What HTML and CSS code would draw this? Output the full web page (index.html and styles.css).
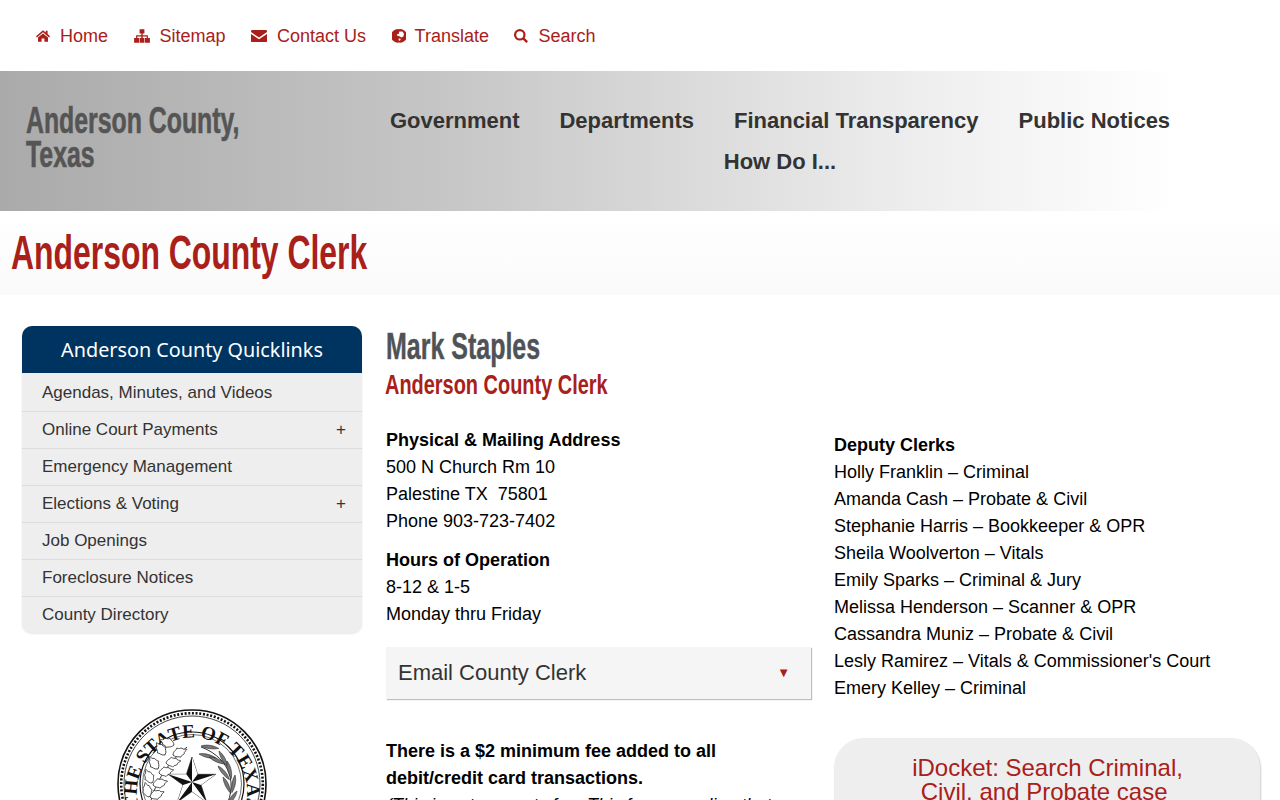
FILE: index.html
```html
<!DOCTYPE html>
<html lang="en">
<head>
  <meta charset="UTF-8">
  <meta name="viewport" content="width=device-width, initial-scale=1.0">
  <title>Anderson County Clerk</title>
  <link rel="stylesheet" href="styles.css">
</head>
<body>
  <nav class="top-nav">
    <a href="#"><svg class="icon icon-sm" viewBox="0 0 14 12"><path d="M7 0.3 L0 6.2 L0.9 7.4 L7 2.2 L13.1 7.4 L14 6.2 L11.6 4.1 L11.6 0.8 L9.7 0.8 L9.7 2.5 Z M7 3.4 L2 7.6 L2 11.8 L5.6 11.8 L5.6 8.6 L8.4 8.6 L8.4 11.8 L12 11.8 L12 7.6 Z"/></svg>Home</a>
    <a href="#"><svg class="icon icon-lg" viewBox="0 0 16 14"><path d="M5.6 0.3 H10.4 V4.5 H8.7 V6.2 H13.9 V9 H15.9 V13.7 H11 V9 H12.7 V7.4 H8.7 V9 H10.4 V13.7 H5.6 V9 H7.3 V7.4 H3.3 V9 H5 V13.7 H0.1 V9 H2.1 V6.2 H7.3 V4.5 H5.6 Z"/></svg>Sitemap</a>
    <a href="#"><svg class="icon icon-lg" viewBox="0 0 16 13"><path d="M1.2 0.5 H14.8 Q16 0.5 16 1.8 V2.6 L8 8 L0 2.6 V1.8 Q0 0.5 1.2 0.5 Z M0 4.4 L8 9.8 L16 4.4 V11.4 Q16 12.6 14.8 12.6 H1.2 Q0 12.6 0 11.4 Z"/></svg>Contact Us</a>
    <a href="#"><svg class="icon icon-sm icon-globe" viewBox="0 0 14 14"><path fill-rule="evenodd" d="M7 0.2 A6.8 6.8 0 1 0 7 13.6 A6.8 6.8 0 1 0 7 0.2 Z M7.4 2.4 L10.4 2.4 L12 4.8 L11.4 7.6 L9.4 8.4 L8 7.4 L5.4 6.8 L4.8 5.2 L6.6 5 Z M6.6 9.4 L8.8 9.8 L8 11.8 L6.8 11.4 Z"/></svg>Translate</a>
    <a href="#"><svg class="icon icon-sm" viewBox="0 0 14 14"><path fill-rule="evenodd" d="M5.8 0 A5.8 5.8 0 1 0 5.8 11.6 A5.8 5.8 0 1 0 5.8 0 Z M5.8 2.2 A3.6 3.6 0 1 1 5.8 9.4 A3.6 3.6 0 1 1 5.8 2.2 Z"/><path d="M8.7 10.4 L10.4 8.7 L14 12.3 L12.3 14 Z"/></svg>Search</a>
  </nav>

  <header class="banner">
    <div class="site-name">Anderson County,<br>Texas</div>
    <div class="main-menu">
      <a href="#">Government</a>
      <a href="#">Departments</a>
      <a href="#">Financial Transparency</a>
      <a href="#">Public Notices</a>
      <a href="#">How Do I...</a>
    </div>
  </header>

  <div class="page-title">
    <h1>Anderson County Clerk</h1>
  </div>

  <div class="content">
    <aside class="sidebar">
      <div class="quick-box">
        <h3>Anderson County Quicklinks</h3>
        <ul>
          <li>Agendas, Minutes, and Videos</li>
          <li>Online Court Payments <span>+</span></li>
          <li>Emergency Management</li>
          <li>Elections &amp; Voting <span>+</span></li>
          <li>Job Openings</li>
          <li>Foreclosure Notices</li>
          <li>County Directory</li>
        </ul>
      </div>
      <div class="seal">
        <svg viewBox="0 0 150 150" width="150" height="150">
          <defs>
            <path id="oak" d="M0 0 C2 -4 5 -3 6 -5 C8 -3 9 -4 11 -3 C11 -1 14 -1 15 0 C14 1 11 1 11 3 C9 4 8 3 6 5 C5 3 2 4 0 0 Z" fill="#fff" stroke="#333" stroke-width="0.8"/>
            <path id="olive" d="M0 0 C5 -2.5 12 -2.5 18 0 C12 2 5 2 0 0 Z" fill="#777" stroke="#222" stroke-width="0.5"/>
          </defs>
          <circle cx="75" cy="75" r="74" fill="#fff" stroke="#111" stroke-width="1.6"/>
          <circle cx="75" cy="75" r="70.8" fill="none" stroke="#111" stroke-width="2.6" stroke-dasharray="2 1.7"/>
          <circle cx="75" cy="75" r="68" fill="none" stroke="#111" stroke-width="0.8"/>
          <circle cx="75" cy="75" r="52" fill="none" stroke="#111" stroke-width="1.2"/>
          <circle cx="75" cy="75" r="49.5" fill="none" stroke="#111" stroke-width="0.6"/>
          <path id="seal-arc" d="M 21 94 A 55 55 0 1 1 129 94" fill="none"/>
          <text class="seal-text"><textPath href="#seal-arc" startOffset="50%" text-anchor="middle">THE STATE OF TEXAS</textPath></text>
          <path d="M70 38 C56 50 38 68 32 100" fill="none" stroke="#333" stroke-width="1"/>
          <use href="#oak" transform="translate(56 46) rotate(-22)"/>
          <use href="#oak" transform="translate(49 54) rotate(-8)"/>
          <use href="#oak" transform="translate(57 36) rotate(-160)"/>
          <use href="#oak" transform="translate(48 46) rotate(-125)"/>
          <use href="#oak" transform="translate(42 64) rotate(-12)"/>
          <use href="#oak" transform="translate(41 60) rotate(-125)"/>
          <use href="#oak" transform="translate(36 76) rotate(-15)"/>
          <use href="#oak" transform="translate(35 74) rotate(-115)"/>
          <use href="#oak" transform="translate(33 88) rotate(-20)"/>
          <use href="#oak" transform="translate(32 88) rotate(-105)"/>
          <path d="M84 38 C106 46 124 68 108 100" fill="none" stroke="#333" stroke-width="1"/>
          <use href="#olive" transform="translate(84 37) rotate(8)"/>
          <use href="#olive" transform="translate(82 45) rotate(14)"/>
          <use href="#olive" transform="translate(92 48) rotate(24)"/>
          <use href="#olive" transform="translate(102 42) rotate(62)"/>
          <use href="#olive" transform="translate(110 52) rotate(76)"/>
          <use href="#olive" transform="translate(101 57) rotate(50)"/>
          <use href="#olive" transform="translate(118 66) rotate(100)"/>
          <use href="#olive" transform="translate(106 68) rotate(65)"/>
          <use href="#olive" transform="translate(120 82) rotate(125)"/>
          <path d="M75 48 L80.6 65.3 L98.8 65.3 L84 75.9 L89.7 93.2 L75 82.5 L60.3 93.2 L66 75.9 L51.2 65.3 L69.4 65.3 Z" fill="#111" stroke="#111" stroke-width="0.6"/>
          <path d="M75 73 L75 48 L80.6 65.3 Z M75 73 L98.8 65.3 L84 75.9 Z M75 73 L89.7 93.2 L75 82.5 Z M75 73 L60.3 93.2 L66 75.9 Z M75 73 L51.2 65.3 L69.4 65.3 Z" fill="#fff"/>
        </svg>
      </div>
    </aside>

    <main class="main">
      <h2 class="person">Mark Staples</h2>
      <h3 class="role">Anderson County Clerk</h3>
      <div class="columns">
        <div class="col-left">
          <p class="block"><strong>Physical &amp; Mailing Address</strong><br>500 N Church Rm 10<br>Palestine TX&nbsp; 75801<br>Phone 903-723-7402</p>
          <p class="block"><strong>Hours of Operation</strong><br>8-12 &amp; 1-5<br>Monday thru Friday</p>
          <div class="accordion">Email County Clerk <span class="arrow">▼</span></div>
          <p class="fee"><strong>There is a $2 minimum fee added to all debit/credit card transactions.</strong><br><em>(This is not a county fee. This fee was a line that</em></p>
        </div>
        <div class="col-right">
          <p class="block"><strong>Deputy Clerks</strong><br>Holly Franklin – Criminal<br>Amanda Cash – Probate &amp; Civil<br>Stephanie Harris – Bookkeeper &amp; OPR<br>Sheila Woolverton – Vitals<br>Emily Sparks – Criminal &amp; Jury<br>Melissa Henderson – Scanner &amp; OPR<br>Cassandra Muniz – Probate &amp; Civil<br>Lesly Ramirez – Vitals &amp; Commissioner's Court<br>Emery Kelley – Criminal</p>
          <a class="docket" href="#">iDocket: Search Criminal,<br>Civil, and Probate case&nbsp;</a>
        </div>
      </div>
    </main>
  </div>
</body>
</html>
```

FILE: styles.css
```css
html, body {
  height: 800px;
  overflow: hidden;
}

body {
  margin: 0;
  font-family: "Liberation Sans", Arial, sans-serif;
  font-size: 18px;
  line-height: 27px;
  color: #000;
  background: #fff;
}

a {
  color: inherit;
  text-decoration: none;
}

/* top links */
.top-nav {
  height: 69px;
  padding: 2px 0 0 36px;
  display: flex;
  align-items: center;
  gap: 25.5px;
  color: #a9201a;
}

.top-nav a {
  display: flex;
  align-items: center;
}

.icon {
  height: 14px;
  margin-right: 10px;
  fill: #a9201a;
  position: relative;
  top: -1px;
}

.icon-sm {
  width: 14px;
}

.icon-lg {
  width: 16px;
}

.icon-globe {
  margin-right: 9px;
}

/* grey banner */
.banner {
  height: 140px;
  display: flex;
  background: linear-gradient(to right, #aaa 0%, #c6c6c6 35%, #eee 72%, #fff 92%);
}

.site-name {
  width: 364px;
  flex-shrink: 0;
  box-sizing: border-box;
  padding: 33px 0 0 26px;
  font-weight: bold;
  font-size: 36px;
  line-height: 34px;
  color: #555;
  -webkit-text-stroke: 0.6px #555;
  transform: scaleX(0.69);
  transform-origin: 26px 0;
  white-space: nowrap;
}

.main-menu {
  width: 832px;
  padding-top: 29px;
  display: flex;
  flex-wrap: wrap;
  justify-content: center;
  align-content: flex-start;
  font-size: 22px;
  font-weight: bold;
  line-height: 41px;
  color: #333;
}

.main-menu a {
  padding: 0 20px;
}

/* page title */
.page-title {
  height: 84px;
  background: linear-gradient(to bottom, #fff, #fafafa);
}

.page-title h1 {
  margin: 0;
  padding: 13px 0 0 11px;
  font-weight: bold;
  font-size: 49px;
  line-height: 56px;
  color: #a9201a;
  transform: scaleX(0.651);
  transform-origin: 11px 0;
  white-space: nowrap;
}

/* body area */
.content {
  display: flex;
  padding: 31px 20px 0 22px;
}

.sidebar {
  width: 340px;
  flex-shrink: 0;
}

.quick-box {
  border-radius: 10px;
  background: #eee;
  box-shadow: 0 1px 2px rgba(0, 0, 0, 0.1);
}

.quick-box h3 {
  margin: 0;
  height: 47px;
  line-height: 48px;
  text-align: center;
  background: #003460;
  color: #fff;
  border-radius: 10px 10px 0 0;
  font-family: "Noto Sans", sans-serif;
  font-weight: normal;
  font-size: 19.8px;
}

.quick-box ul {
  margin: 0;
  padding: 2px 0 0;
  list-style: none;
}

.quick-box li {
  display: flex;
  justify-content: space-between;
  height: 36px;
  line-height: 35px;
  padding: 0 16px 0 20px;
  border-bottom: 1px solid #ddd;
  font-size: 17px;
  color: #333;
}

.quick-box li:last-child {
  border-bottom: none;
}

.seal {
  margin-top: 76px;
  text-align: center;
}

.seal-text {
  font-family: "Liberation Serif", serif;
  font-size: 19px;
  font-weight: bold;
  fill: #111;
}

.main {
  width: 876px;
  margin-left: 24px;
}

.person {
  margin: 0;
  padding-top: 1px;
  font-weight: bold;
  font-size: 36px;
  line-height: 39px;
  color: #4f5357;
  -webkit-text-stroke: 0.4px #4f5357;
  transform: scaleX(0.694);
  transform-origin: 0 0;
  white-space: nowrap;
}

.role {
  margin: 0 0 0 -1px;
  font-weight: bold;
  font-size: 28px;
  line-height: 38px;
  color: #a9201a;
  transform: scaleX(0.712);
  transform-origin: 0 0;
  white-space: nowrap;
}

.columns {
  display: flex;
  gap: 22px;
  margin-top: 23px;
}

.col-left,
.col-right {
  width: 426px;
}

.col-right {
  padding-top: 5px;
}

.block {
  margin: 0 0 12px;
}

.accordion {
  display: flex;
  justify-content: space-between;
  align-items: center;
  box-sizing: border-box;
  width: 425px;
  height: 52px;
  margin-top: 19px;
  padding: 0 21px 2px 12px;
  background: #f5f5f5;
  box-shadow: 1px 1px 1px rgba(0, 0, 0, 0.25);
  font-size: 22px;
  color: #333;
}

.arrow {
  font-size: 13px;
  color: #a9201a;
}

.fee {
  margin: 39px 0 0;
}

.docket {
  display: block;
  width: 385px;
  margin-top: 36px;
  padding: 18px 20px 30px 21px;
  border-radius: 30px;
  background: #eee;
  box-shadow: 1px 1px 2px rgba(0, 0, 0, 0.2);
  text-align: center;
  font-size: 24px;
  line-height: 24px;
  color: #a9201a;
}
```
